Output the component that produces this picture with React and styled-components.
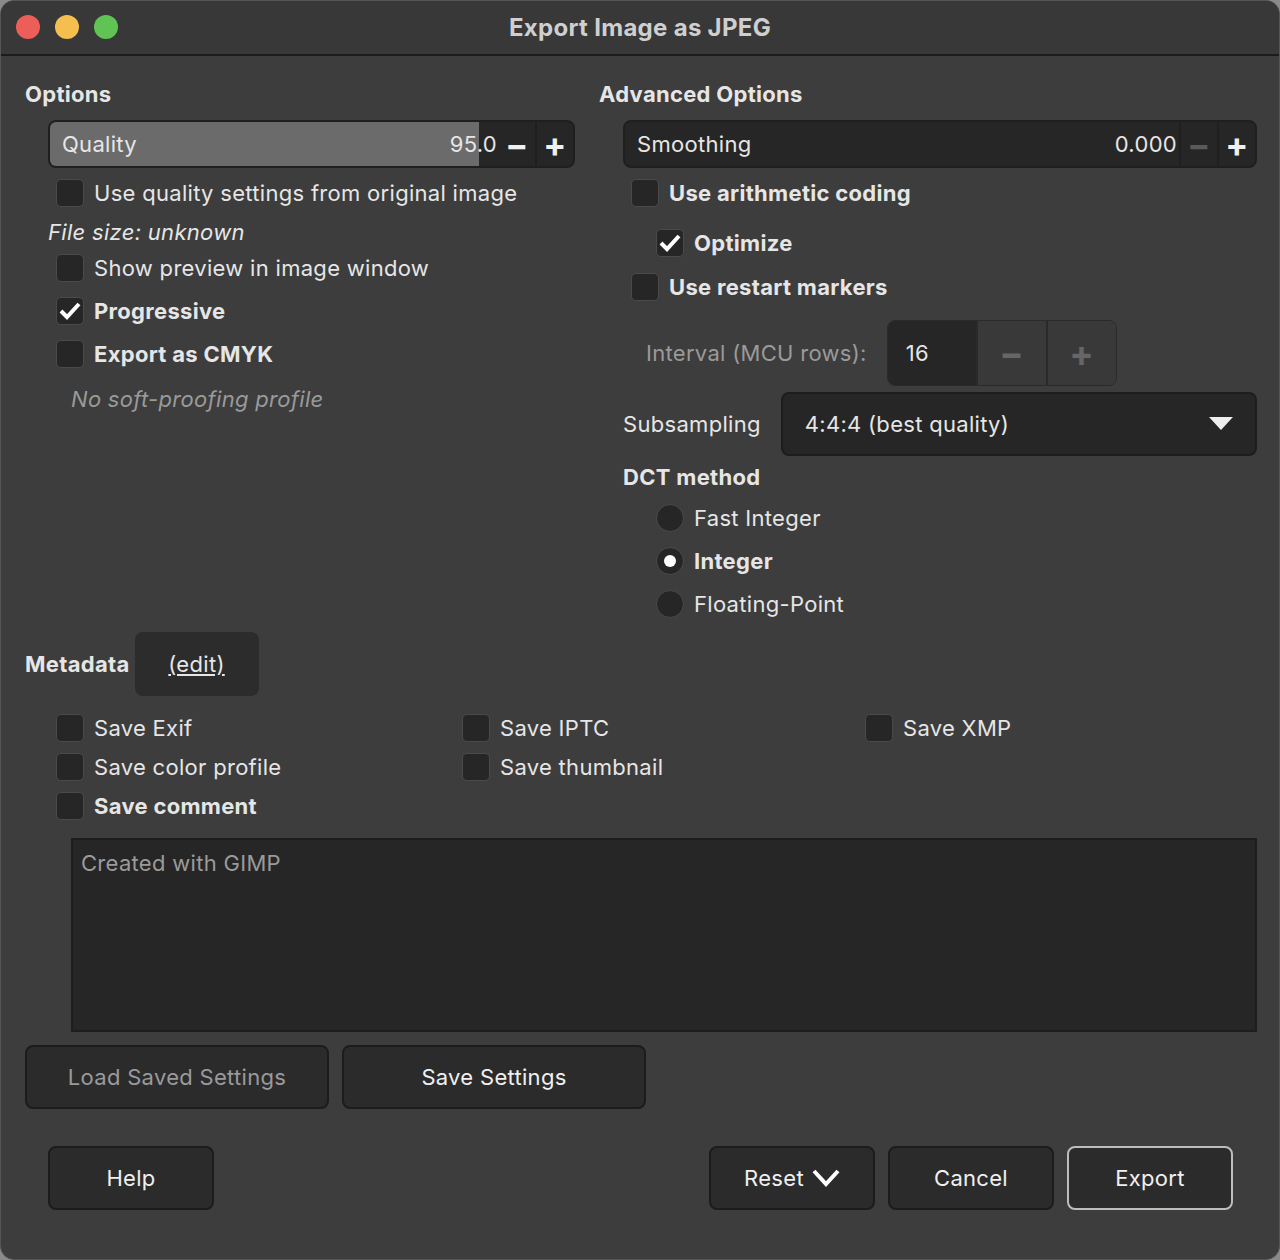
import React from "react";
import styled, { createGlobalStyle } from "styled-components";

const G = createGlobalStyle`
  html,body{margin:0;padding:0;background:#8a8a8a;}
  body{font-family:Inter,"Liberation Sans",sans-serif;color:#e6e6e6;letter-spacing:0.3px;}
`;
const Win = styled.div`
  width:1280px;height:1260px;box-sizing:border-box;background:#3d3d3d;border-radius:14px;
  overflow:hidden;display:flex;flex-direction:column;border:1px solid #555;
`;
const TitleBar = styled.div`
  height:53px;flex:none;display:flex;align-items:center;position:relative;background:#383838;
  border-bottom:2px solid #1c1c1c;justify-content:center;
`;
const Lights = styled.div`position:absolute;left:15px;top:14px;display:flex;gap:15px;`;
const Light = styled.span`width:24px;height:24px;border-radius:50%;background:${p=>p.c};`;
const Title = styled.div`font-size:24px;font-weight:700;color:#cfcfcf;`;
const Body = styled.div`padding:0 22px 0 24px;display:flex;flex-direction:column;flex:1;`;
const Top = styled.div`display:grid;grid-template-columns:550px 1fr;column-gap:24px;height:524px;`;
const Col = styled.div`display:flex;flex-direction:column;`;
const Head = styled.div`font-size:22px;font-weight:700;height:${p=>p.h??24}px;line-height:${p=>p.h??24}px;
  margin-top:${p=>p.mt??26}px;margin-left:${p=>p.ml??0}px;`;
const Spin = styled.div`
  margin-left:${p=>p.ml}px;margin-top:14px;height:48px;border-radius:8px;border:2px solid #1f1f1f;
  background:#262626;display:flex;align-items:center;overflow:hidden;box-sizing:border-box;position:relative;
`;
const Fill = styled.div`position:absolute;left:0;top:0;bottom:0;background:#6b6b6b;`;
const SpinLabel = styled.span`position:relative;flex:1;padding-left:12px;font-size:22px;`;
const SpinVal = styled.span`position:relative;font-size:22px;padding-right:2px;`;
const SpinBtn = styled.span`
  position:relative;width:36px;height:100%;display:flex;align-items:center;justify-content:center;
  border-left:${p=>p.sep?"2px solid #1f1f1f":"none"};color:${p=>p.dim?"#5a5a5a":"#f0f0f0"};font-size:34px;font-weight:700;
`;
const Row = styled.div`
  display:flex;align-items:center;gap:10px;height:${p=>p.h||43}px;margin-left:${p=>p.ml??31}px;
  font-size:22px;font-weight:${p=>p.b?700:400};
`;
const Box = styled.span`
  width:28px;height:28px;flex:none;border-radius:5px;background:#262626;border:1px solid #4a4a4a;box-sizing:border-box;
  display:flex;align-items:center;justify-content:center;
`;
const Note = styled.div`font-size:22px;font-style:italic;height:${p=>p.h}px;display:flex;align-items:center;
  margin-left:${p=>p.ml}px;color:${p=>p.c||"#e6e6e6"};`;
const IntRow = styled.div`display:flex;align-items:center;margin-top:${p=>p.mt}px;margin-left:47px;gap:20px;`;
const Dim = styled.span`font-size:22px;color:#9a9a9a;`;
const IntBox = styled.div`display:flex;height:64px;border:1px solid #2a2a2a;border-radius:8px;overflow:hidden;`;
const IntVal = styled.div`width:88px;background:#262626;display:flex;align-items:center;padding-left:18px;box-sizing:border-box;font-size:22px;`;
const IntBtn = styled.div`width:68px;background:#393939;border-left:2px solid #2a2a2a;display:flex;align-items:center;justify-content:center;color:#666;font-size:36px;font-weight:700;`;
const SubRow = styled.div`display:flex;align-items:center;gap:20px;margin-top:6px;margin-left:24px;font-size:22px;`;
const Combo = styled.div`flex:1;height:64px;border-radius:8px;background:#262626;border:2px solid #1d1d1d;box-sizing:border-box;
  display:flex;align-items:center;justify-content:space-between;padding:0 22px;font-size:22px;`;
const Radio = styled.span`width:28px;height:28px;border-radius:50%;background:#262626;border:1px solid #4a4a4a;box-sizing:border-box;
  display:flex;align-items:center;justify-content:center;`;
const Dot = styled.span`width:12px;height:12px;border-radius:50%;background:#fff;`;
const MetaHead = styled.div`display:flex;align-items:center;gap:5px;height:64px;margin-top:${p=>p.mt}px;`;
const EditBtn = styled.div`width:124px;height:64px;background:#2c2c2c;border-radius:8px;display:flex;align-items:center;justify-content:center;
  font-size:22px;text-decoration:underline;`;
const MetaGrid = styled.div`display:grid;grid-template-columns:406px 403px 1fr;margin-left:31px;margin-top:12px;`;
const MRow = styled(Row)`margin-left:0;height:39px;`;
const Text = styled.div`margin:13px 0 0 46px;height:194px;background:#262626;border:2px solid #1d1d1d;box-sizing:border-box;
  padding:10px 8px;font-size:22px;color:#9a9a9a;`;
const BtnRow = styled.div`display:flex;gap:13px;margin-top:13px;`;
const Btn = styled.div`
  width:${p=>p.w}px;height:64px;box-sizing:border-box;border-radius:8px;background:#2b2b2b;
  border:${p=>p.hl?"2px solid #bdbdbd":"2px solid #1c1c1c"};display:flex;align-items:center;justify-content:center;gap:8px;
  font-size:22px;color:${p=>p.dim?"#9a9a9a":"#f0f0f0"};
`;
const Bottom = styled.div`display:flex;margin-top:37px;padding-left:23px;padding-right:24px;gap:13px;`;
const Spacer = styled.div`flex:1;`;

const Check = () => (
  <svg width="22" height="20" viewBox="0 0 22 20"><path d="M2 10l6 6L20 3" fill="none" stroke="#fff" strokeWidth="4"/></svg>
);
const CB = ({ on, children, b, ml, h }) => (
  <Row b={b} ml={ml} h={h}><Box>{on && <Check/>}</Box>{children}</Row>
);

export default function App(){
  return (<Win><G/>
    <TitleBar><Lights><Light c="#ec5f58"/><Light c="#f4bf4f"/><Light c="#5fc454"/></Lights><Title>Export Image as JPEG</Title></TitleBar>
    <Body>
      <Top>
        <Col>
          <Head>Options</Head>
          <Spin ml={23}><Fill style={{width:"82%"}}/><SpinLabel>Quality</SpinLabel><SpinVal>95.0</SpinVal>
            <SpinBtn>−</SpinBtn><SpinBtn sep>+</SpinBtn></Spin>
          <CB h={50}>Use quality settings from original image</CB>
          <Note h={28} ml={23}>File size: unknown</Note>
          <CB>Show preview in image window</CB>
          <CB on b>Progressive</CB>
          <CB b>Export as CMYK</CB>
          <Note h={48} ml={46} c="#9a9a9a">No soft-proofing profile</Note>
        </Col>
        <Col>
          <Head>Advanced Options</Head>
          <Spin ml={24}><SpinLabel>Smoothing</SpinLabel><SpinVal>0.000</SpinVal>
            <SpinBtn sep dim>−</SpinBtn><SpinBtn sep>+</SpinBtn></Spin>
          <CB b ml={32} h={50}>Use arithmetic coding</CB>
          <CB on b ml={57} h={50}>Optimize</CB>
          <CB b ml={32} h={38}>Use restart markers</CB>
          <IntRow mt={14}><Dim>Interval (MCU rows):</Dim>
            <IntBox><IntVal>16</IntVal><IntBtn>−</IntBtn><IntBtn>+</IntBtn></IntBox></IntRow>
          <SubRow>Subsampling<Combo>4:4:4 (best quality)
            <svg width="24" height="14" viewBox="0 0 24 14"><path d="M0 0h24L12 13z" fill="#eee"/></svg></Combo></SubRow>
          <Head mt={2} h={38} ml={24}>DCT method</Head>
          <Row ml={57} h={43}><Radio/>Fast Integer</Row>
          <Row ml={57} h={43} b><Radio><Dot/></Radio>Integer</Row>
          <Row ml={57} h={43}><Radio/>Floating-Point</Row>
        </Col>
      </Top>
      <MetaHead mt={52}><Head mt={0}>Metadata</Head><EditBtn>(edit)</EditBtn></MetaHead>
      <MetaGrid>
        <MRow><Box/>Save Exif</MRow><MRow><Box/>Save IPTC</MRow><MRow><Box/>Save XMP</MRow>
        <MRow><Box/>Save color profile</MRow><MRow><Box/>Save thumbnail</MRow><span/>
        <MRow b><Box/>Save comment</MRow>
      </MetaGrid>
      <Text>Created with GIMP</Text>
      <BtnRow><Btn w={304} dim>Load Saved Settings</Btn><Btn w={304}>Save Settings</Btn></BtnRow>
      <Bottom>
        <Btn w={166}>Help</Btn><Spacer/>
        <Btn w={166}>Reset<svg width="28" height="18" viewBox="0 0 28 18"><path d="M2 2l12 13L26 2" fill="none" stroke="#fff" strokeWidth="4"/></svg></Btn>
        <Btn w={166}>Cancel</Btn><Btn w={166} hl>Export</Btn>
      </Bottom>
    </Body>
  </Win>);
}
